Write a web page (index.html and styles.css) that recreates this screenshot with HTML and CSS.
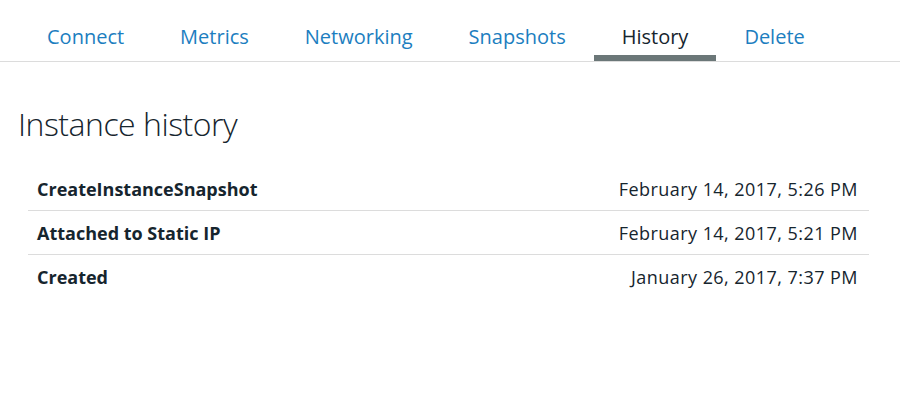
FILE: index.html
```html
<!DOCTYPE html>
<html lang="en">
<head>
<meta charset="utf-8">
<title>Instance history</title>
<link rel="stylesheet" href="styles.css">
</head>
<body>
<nav class="tabs">
  <a class="tab">Connect</a>
  <a class="tab">Metrics</a>
  <a class="tab">Networking</a>
  <a class="tab">Snapshots</a>
  <a class="tab active">History</a>
  <a class="tab">Delete</a>
</nav>
<main class="content">
  <h1 class="title">Instance history</h1>
  <ul class="history">
    <li class="row"><span class="event">CreateInstanceSnapshot</span><span class="date">February 14, 2017, 5:26 PM</span></li>
    <li class="row"><span class="event">Attached to Static IP</span><span class="date">February 14, 2017, 5:21 PM</span></li>
    <li class="row"><span class="event">Created</span><span class="date">January 26, 2017, 7:37 PM</span></li>
  </ul>
</main>
</body>
</html>
```

FILE: styles.css
```css
* { box-sizing: border-box; }
html, body { margin: 0; background: #fff; }
body {
  font-family: "Open Sans", "Noto Sans", sans-serif;
  color: #16252e;
}
.tabs {
  display: flex;
  padding-left: 19px;
  height: 62px;
  border-bottom: 1px solid #dcdcdc;
}
.tab {
  display: flex;
  align-items: center;
  padding: 17px 28px 0;
  font-size: 20px;
  color: #1c7ec0;
  border-bottom: 6px solid transparent;
}
.tab.active {
  color: #16252e;
  border-bottom-color: #6b7778;
}
.content {
  padding: 0 31px 0 18px;
}
.title {
  margin: 40px 0 0;
  font-size: 32px;
  font-weight: 300;
  letter-spacing: -0.5px;
  line-height: 44px;
  color: #16252e;
}
.history {
  list-style: none;
  margin: 21px 0 0 10px;
  padding: 0;
}
.row {
  display: flex;
  justify-content: space-between;
  align-items: center;
  height: 44px;
  padding: 0 11px 0 9px;
  font-size: 18px;
  border-bottom: 1px solid #dcdcdc;
}
.row:last-child { border-bottom: none; }
.event { font-weight: 700; }
.date { color: #16252e; letter-spacing: 0.45px; }
```
